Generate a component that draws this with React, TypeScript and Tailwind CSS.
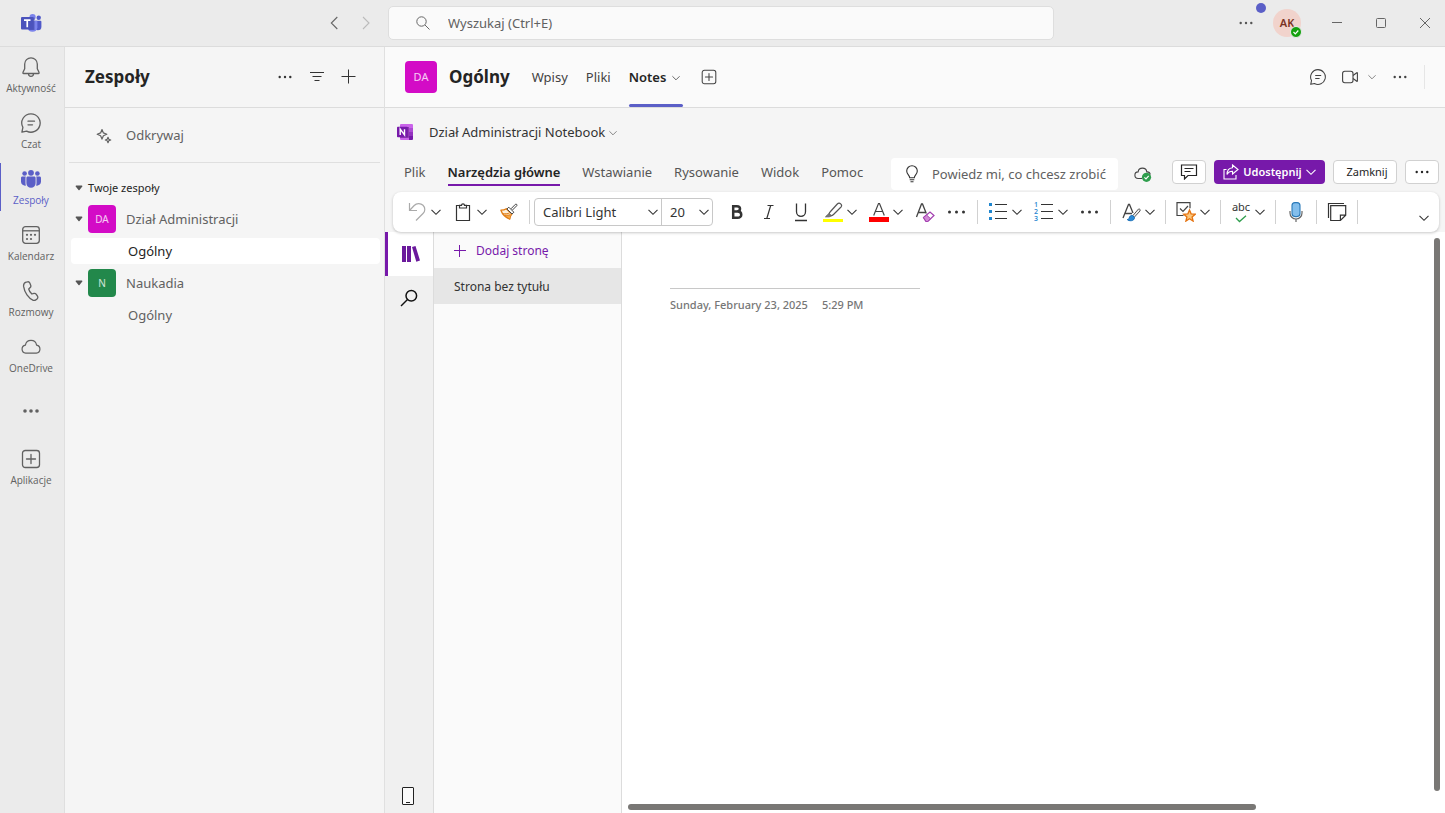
import React from "react";

type IconProps = { className?: string };

function Chevron({ className = "h-2.5 w-2.5" }: IconProps) {
  return (
    <svg viewBox="0 0 10 10" className={`shrink-0 ${className}`} fill="none" stroke="currentColor" strokeWidth="1.1" aria-hidden="true">
      <path d="M0.5 2.8 5 7.3 9.5 2.8" />
    </svg>
  );
}

function Dots() {
  return (
    <svg viewBox="0 0 16 16" className="h-4 w-4" fill="currentColor" aria-hidden="true">
      <circle cx="2.7" cy="8" r="1.2" />
      <circle cx="8" cy="8" r="1.2" />
      <circle cx="13.3" cy="8" r="1.2" />
    </svg>
  );
}

function WideDots() {
  return (
    <svg viewBox="0 0 20 16" className="h-4 w-5" fill="currentColor" aria-hidden="true">
      <circle cx="2.5" cy="8" r="1.5" />
      <circle cx="9.5" cy="8" r="1.5" />
      <circle cx="16.5" cy="8" r="1.5" />
    </svg>
  );
}

function Caret() {
  return (
    <svg viewBox="0 0 8 6" className="h-1.5 w-2 shrink-0" fill="#555" aria-hidden="true">
      <path d="M1.2.6h5.6a.6.6 0 0 1 .5 1L4.5 4.900a.7.7 0 0 1-1 0L.7 1.600a.6.6 0 0 1 .5-1z" />
    </svg>
  );
}

function TeamsLogo() {
  return (
    <svg viewBox="0 0 22 20" className="h-5 w-[22px]" aria-hidden="true">
      <circle cx="18.7" cy="4.8" r="2.2" fill="#5059c9" />
      <path d="M15 7.8h5.5c.5 0 .9.4.9.9v5a3.6 3.6 0 0 1-3.6 3.6c-1.6 0-2.8-1-2.8-2.5z" fill="#5059c9" />
      <circle cx="12.6" cy="4" r="3.1" fill="#7b83eb" />
      <path d="M7.5 7.8h9c.5 0 .9.4.9.9v5.8a5 5 0 0 1-9.900 0z" fill="#7b83eb" />
      <path d="M9 4.5h5.5V17H9z" fill="#3b40a0" opacity=".6" />
      <rect x="1" y="4" width="12.5" height="12.5" rx="1" fill="#4b53bc" />
      <path d="M4 7.2h6.5M7.250 7.2v7" stroke="#fff" strokeWidth="1.7" />
    </svg>
  );
}

function OneNoteLogo() {
  return (
    <svg viewBox="0 0 16 16" className="h-4 w-4" aria-hidden="true">
      <path d="M3 1a1 1 0 0 1 1-1h8v16H4a1 1 0 0 1-1-1z" fill="#ca64ea" />
      <path d="M12 0h3a1 1 0 0 1 1 1v3.5h-4z" fill="#ca64ea" />
      <path d="M12 4h4v4h-4z" fill="#ae4bd5" />
      <path d="M12 8h4v4h-4z" fill="#9332bf" />
      <path d="M12 12h4v3a1 1 0 0 1-1 1h-3z" fill="#7719aa" />
      <path d="M3 3h8.800v10.800H3z" fill="#4b1270" opacity=".6" />
      <rect x="0" y="2.8" width="10.7" height="10.4" rx=".8" fill="#7719aa" />
      <path d="M3.2 10.900V5.200L7.500 10.900V5.200" stroke="#fff" strokeWidth="1.4" fill="none" />
    </svg>
  );
}

function ChatIcon({ className = "h-5 w-5" }: IconProps) {
  return (
    <svg viewBox="0 0 20 20" className={className} fill="none" stroke="currentColor" strokeWidth="1.3" strokeLinecap="round" strokeLinejoin="round" aria-hidden="true">
      <path d="M10 .8a9.200 9.200 0 1 1-4.400 17.300L.9 19.200 1.900 14.400A9.200 9.200 0 0 1 10 .8z" />
      <path d="M7 8.2h6.500M7 11.8h4.500" />
    </svg>
  );
}

function BellIcon() {
  return (
    <svg viewBox="0 0 20 20" className="h-5 w-5" fill="none" stroke="currentColor" strokeWidth="1.3" strokeLinejoin="round" aria-hidden="true">
      <path d="M10 .8c-3.500 0-6.300 2.800-6.300 6.300v4.600L1.900 15.600c-.2.400.1.900.6.900h15c.5 0 .8-.5.600-.9l-1.800-3.900V7.100C16.300 3.600 13.500.8 10 .8z" />
      <path d="M7.500 16.800a2.500 2.500 0 0 0 5 0" />
    </svg>
  );
}

function PeopleIcon() {
  return (
    <svg viewBox="0 0 20 20" className="h-5 w-5" fill="currentColor" aria-hidden="true">
      <circle cx="10" cy="3.8" r="2.900" />
      <circle cx="3.6" cy="4.5" r="2.300" />
      <circle cx="16.4" cy="4.5" r="2.300" />
      <path d="M6.800 7.600h6.400c.8 0 1.400.6 1.400 1.400v5.200a4.600 4.600 0 0 1-9.200 0V9c0-.8.6-1.400 1.400-1.400z" />
      <path d="M1.400 7.600h3.500c-.3.400-.4.900-.4 1.400v5.200c0 .8.200 1.600.5 2.300A4 4 0 0 1 0 12.700V9c0-.8.6-1.400 1.400-1.400zM18.600 7.600h-3.500c.3.400.4.900.4 1.400v5.200c0 .8-.2 1.600-.5 2.300a4 4 0 0 0 5-3.800V9c0-.8-.6-1.400-1.400-1.400z" />
    </svg>
  );
}

function CalendarIcon() {
  return (
    <svg viewBox="0 0 20 20" className="h-5 w-5" fill="none" stroke="currentColor" strokeWidth="1.3" aria-hidden="true">
      <rect x="1.7" y="1.7" width="16.6" height="16.6" rx="2.8" />
      <path d="M1.700 5.800h16.600" />
      <g fill="currentColor" stroke="none">
        <circle cx="6" cy="9.800" r="1.100" />
        <circle cx="10" cy="9.800" r="1.100" />
        <circle cx="14" cy="9.800" r="1.100" />
        <circle cx="6" cy="14" r="1.100" />
        <circle cx="10" cy="14" r="1.100" />
      </g>
    </svg>
  );
}

function PhoneIcon() {
  return (
    <svg viewBox="0 0 20 20" className="h-5 w-5" fill="none" stroke="currentColor" strokeWidth="1.3" strokeLinejoin="round" aria-hidden="true">
      <path d="M5.200 1.200l1.200-.3c1-.3 2 .2 2.400 1.200l.9 2.200c.3.800.1 1.700-.5 2.300L7.700 8c.4 1.800 1.600 3.600 3.200 5l2-.6c.8-.2 1.700.1 2.200.8l1.300 1.800c.6.900.5 2-.2 2.800l-.8.8c-.9.800-2.100 1.100-3.200.7C7.500 17.500 3.500 11.500 2.600 5.400c-.2-1.900.8-3.700 2.600-4.200z" />
    </svg>
  );
}

function CloudIcon() {
  return (
    <svg viewBox="0 0 20 20" className="h-5 w-5" fill="none" stroke="currentColor" strokeWidth="1.2" aria-hidden="true">
      <path d="M4.700 16.200h10.600a4.100 4.100 0 0 0 .3-8.100 5.700 5.700 0 0 0-11.200 0 4.100 4.100 0 0 0 .3 8.100z" />
    </svg>
  );
}

function AddBoxIcon({ className = "h-5 w-5" }: IconProps) {
  return (
    <svg viewBox="0 0 20 20" className={className} fill="none" stroke="currentColor" strokeWidth="1.3" strokeLinecap="round" aria-hidden="true">
      <rect x="1.5" y="1.5" width="17" height="17" rx="2.8" />
      <path d="M10 5.500v9M5.500 10h9" />
    </svg>
  );
}

function RailDots() {
  return (
    <svg viewBox="0 0 20 20" className="h-5 w-5" fill="currentColor" aria-hidden="true">
      <circle cx="4" cy="9" r="1.8" />
      <circle cx="10" cy="9" r="1.8" />
      <circle cx="16" cy="9" r="1.8" />
    </svg>
  );
}

const railItems = [
  { label: "Aktywność", icon: <BellIcon /> },
  { label: "Czat", icon: <ChatIcon /> },
  { label: "Zespoły", icon: <PeopleIcon />, active: true },
  { label: "Kalendarz", icon: <CalendarIcon /> },
  { label: "Rozmowy", icon: <PhoneIcon /> },
  { label: "OneDrive", icon: <CloudIcon /> },
  { label: "", icon: <RailDots /> },
  { label: "Aplikacje", icon: <AddBoxIcon /> },
];

function TitleBar() {
  return (
    <header className="flex h-[47px] shrink-0 items-center border-b border-[#dcdcdc] bg-[#ebebeb] text-[#555]">
      <div className="flex w-[388px] shrink-0 items-center pr-1.5 pl-5">
        <TeamsLogo />
        <div className="ml-auto flex">
          <button aria-label="Wstecz" className="flex h-8 w-8 items-center justify-center text-[#666]">
            <svg viewBox="0 0 8 14" className="h-3.5 w-2" fill="none" stroke="currentColor" strokeWidth="1.1"><path d="M7.300 1 1.300 7l6 6" /></svg>
          </button>
          <button aria-label="Dalej" className="flex h-8 w-8 items-center justify-center text-[#bbb]">
            <svg viewBox="0 0 8 14" className="h-3.5 w-2" fill="none" stroke="currentColor" strokeWidth="1.1"><path d="m1 1 6 6-6 6" /></svg>
          </button>
        </div>
      </div>
      <label className="flex h-[34px] max-w-[666px] flex-1 items-center gap-[18px] rounded-[5px] border border-[#dedede] bg-[#fafafa] pl-[27px]">
        <svg viewBox="0 0 14 14" className="h-3.5 w-3.5" fill="none" stroke="#666" strokeWidth="1"><circle cx="5.5" cy="5.5" r="4.7" /><path d="m9 9 4.500 4.500" /></svg>
        <input aria-label="Wyszukaj" placeholder="Wyszukaj (Ctrl+E)" className="min-w-0 flex-1 bg-transparent pt-0.5 text-[13px] outline-none placeholder:text-[#616161]" />
      </label>
      <div className="ml-auto flex shrink-0 items-center">
        <button aria-label="Więcej" className="relative mr-[19px] flex h-8 w-4 items-center justify-center">
          <Dots />
          <span className="absolute -top-1 left-[18px] h-2.5 w-2.5 rounded-full bg-[#5b5fc7]" />
        </button>
        <button aria-label="Konto" className="relative mr-4 h-7 w-7 rounded-full bg-[#f1d3cc] text-[11px] font-semibold text-[#7a3324]">
          AK
          <span className="absolute -right-px -bottom-px flex h-3 w-3 items-center justify-center rounded-full border border-[#ebebeb] bg-[#13a10e]">
            <svg viewBox="0 0 8 8" className="h-2 w-2" fill="none" stroke="#fff" strokeWidth="1.2"><path d="m1.500 4 1.800 1.800 3-3.300" /></svg>
          </span>
        </button>
        <div className="flex gap-1 text-[#666]">
          <button aria-label="Minimalizuj" className="flex h-8 w-10 items-center justify-center">
            <svg viewBox="0 0 12 12" className="h-3 w-3" stroke="currentColor"><path d="M1 5.500h10" /></svg>
          </button>
          <button aria-label="Maksymalizuj" className="flex h-8 w-10 items-center justify-center">
            <svg viewBox="0 0 12 12" className="h-3 w-3" fill="none" stroke="currentColor"><rect x="1.5" y="1.5" width="9" height="9" rx="1" /></svg>
          </button>
          <button aria-label="Zamknij okno" className="flex h-8 w-10 items-center justify-center">
            <svg viewBox="0 0 12 12" className="h-3 w-3" stroke="currentColor"><path d="m1 1 10 10M11 1 1 11" /></svg>
          </button>
        </div>
      </div>
    </header>
  );
}

function Rail() {
  return (
    <nav className="flex w-[65px] shrink-0 flex-col gap-2 border-r border-[#dfdfdf] bg-[#ebebeb] pt-1">
      {railItems.map((item, i) => (
        <button
          key={i}
          aria-label={item.label || "Więcej aplikacji"}
          className={
            item.active
              ? "flex h-12 flex-col items-center justify-center gap-1 border-l border-[#5b5fc7] pt-0.5 pr-[3px] text-[#5b5fc7]"
              : "flex h-12 flex-col items-center justify-center gap-1 border-l border-transparent pt-0.5 pr-[3px] text-[#616161]"
          }
        >
          {item.icon}
          {item.label && <span className="font-['Open_Sans',sans-serif] text-[10px] leading-[14px]">{item.label}</span>}
        </button>
      ))}
    </nav>
  );
}

function TeamRow({ initials, name, color }: { initials: string; name: string; color: string }) {
  return (
    <button className="flex h-8 w-full items-center pl-[10px] text-left text-[13px] text-[#616161]">
      <Caret />
      <span className={`mr-[10px] ml-[5px] flex h-7 w-7 items-center justify-center rounded text-[10px] text-white/80 ${color}`}>{initials}</span>
      <span className="pt-0.5">{name}</span>
    </button>
  );
}

function ChannelRow({ name, active }: { name: string; active?: boolean }) {
  return (
    <button
      className={
        active
          ? "my-[3px] ml-[6px] flex h-[26px] items-center rounded bg-white pt-0.5 pl-[57px] text-[13px] text-[#242424]"
          : "my-[3px] ml-[6px] flex h-[26px] items-center rounded pt-0.5 pl-[57px] text-[13px] text-[#616161]"
      }
    >
      {name}
    </button>
  );
}

function Sidebar() {
  return (
    <aside className="flex w-80 shrink-0 flex-col border-r border-[#e0e0e0] bg-[#f5f5f5]">
      <div className="flex h-[61px] items-center border-b border-[#dcdcdc] pr-[27px] pl-5 text-[#333]">
        <h1 className="text-[17px] font-bold text-[#242424]">Zespoły</h1>
        <div className="ml-auto flex gap-4">
          <button aria-label="Więcej opcji" className="flex h-8 w-4 items-center justify-center"><Dots /></button>
          <button aria-label="Filtruj" className="flex h-8 w-4 items-center justify-center">
            <svg viewBox="0 0 16 16" className="h-4 w-4" stroke="currentColor"><path d="M1 3.500h14M3.500 7.500h9M5.500 11.500h5" /></svg>
          </button>
          <button aria-label="Utwórz zespół" className="flex h-8 w-4 items-center justify-center">
            <svg viewBox="0 0 16 16" className="h-4 w-4" stroke="currentColor"><path d="M7.500.5v14M.5 7.500h14" /></svg>
          </button>
        </div>
      </div>
      <div className="px-1">
        <button className="flex h-[55px] w-full items-center gap-[14px] border-b border-[#dfdfdf] pt-0.5 pl-[27px] text-[13px] text-[#616161]">
          <svg viewBox="0 0 16 16" className="h-4 w-4" fill="none" stroke="currentColor" strokeWidth="1.2" strokeLinejoin="round" aria-hidden="true">
            <path d="M6 1.500 7.400 4.900 10.800 6.300 7.400 7.700 6 11.100 4.600 7.700 1.200 6.300l3.400-1.400zM12 9.300l.8 1.900 1.900.8-1.900.8-.8 1.900-.8-1.900-1.900-.8 1.900-.8z" />
          </svg>
          Odkrywaj
        </button>
      </div>
      <div className="flex flex-col pt-[17px] pr-1">
        <button className="mb-[7px] flex h-4 items-center gap-[5px] pl-[10px] text-[11px] text-[#242424]">
          <Caret />
          Twoje zespoły
        </button>
        <TeamRow initials="DA" name="Dział Administracji" color="bg-[#d30bc6]" />
        <ChannelRow name="Ogólny" active />
        <TeamRow initials="N" name="Naukadia" color="bg-[#22884b]" />
        <ChannelRow name="Ogólny" />
      </div>
    </aside>
  );
}

function ChannelHeader() {
  return (
    <div className="flex h-[61px] shrink-0 items-center border-b border-[#dcdcdc] bg-[#fafafa] pr-5 pl-5 text-[13px] text-[#424242]">
      <span className="flex h-8 w-8 items-center justify-center rounded bg-[#d30bc6] text-[11px] text-white/80">DA</span>
      <h2 className="ml-3 text-[17px] font-bold text-[#242424]">Ogólny</h2>
      <nav className="ml-[22px] flex h-full items-center gap-[18px]">
        <a href="#wpisy" className="pt-px">Wpisy</a>
        <a href="#pliki" className="pt-px">Pliki</a>
        <a href="#notes" className="relative flex h-[60px] items-center gap-1.5 pt-px pr-[3px] font-semibold text-[#242424]">
          Notes
          <Chevron className="h-2 w-2 text-[#555]" />
          <span className="absolute inset-x-0 bottom-0 h-[3px] rounded-full bg-[#5b5fc7]" />
        </a>
        <button aria-label="Dodaj kartę"><AddBoxIcon className="h-4 w-4" /></button>
      </nav>
      <div className="ml-auto flex items-center gap-4">
        <button aria-label="Pokaż konwersację"><ChatIcon className="h-4 w-4" /></button>
        <button aria-label="Spotkanie" className="flex items-center gap-2.5">
          <svg viewBox="0 0 16 14" className="h-3.5 w-4" fill="none" stroke="currentColor" strokeWidth="1.1" strokeLinejoin="round"><rect x=".6" y="1.3" width="10.4" height="11.4" rx="2.2" /><path d="m11 5.500 3.800-2.800c.3-.2.6 0 .6.300v8c0 .3-.3.5-.6.300L11 8.500" /></svg>
          <Chevron className="h-2 w-2 text-[#777]" />
        </button>
        <button aria-label="Więcej opcji kanału"><Dots /></button>
        <span className="h-6 w-px bg-[#e6e6e6]" />
      </div>
    </div>
  );
}

function RibbonTabs() {
  return (
    <div className="flex h-8 items-center pr-1.5 pl-[19px]">
      <nav className="flex h-full shrink-0 items-center gap-[22px] pb-0.5 text-[13px] text-[#555] [&>a]:border-b-2 [&>a]:leading-6">
        <a href="#plik" className="border-transparent">Plik</a>
        <a href="#narzedzia" className="border-[#7719aa] font-semibold text-[#242424]">Narzędzia główne</a>
        <a href="#wstawianie" className="border-transparent">Wstawianie</a>
        <a href="#rysowanie" className="border-transparent">Rysowanie</a>
        <a href="#widok" className="border-transparent">Widok</a>
        <a href="#pomoc" className="border-transparent">Pomoc</a>
      </nav>
      <label className="ml-auto flex h-8 w-[227px] items-center gap-3 rounded bg-white pl-[13px]">
        <svg viewBox="0 0 16 18" className="h-[18px] w-4 shrink-0" fill="none" stroke="#333" strokeWidth="1.1"><path d="M5.700 12.800c0-2.500-3-3.500-3-6.800a5.300 5.300 0 0 1 10.600 0c0 3.300-3 4.300-3 6.800zM5.700 14.800h4.600M6.500 16.800h3" /></svg>
        <input aria-label="Powiedz mi, co chcesz zrobić" placeholder="Powiedz mi, co chcesz zrobić" className="min-w-0 flex-1 bg-transparent pt-0.5 text-[13px] outline-none placeholder:text-[#616161]" />
      </label>
      <button aria-label="Zapisano" className="ml-4 shrink-0">
        <svg viewBox="0 0 18 16" className="h-4 w-[18px]" fill="none"><path d="M8 12.500H4.300a3.300 3.300 0 0 1-.2-6.600 4.400 4.400 0 0 1 8.700 0 3.300 3.300 0 0 1 3.500 2.600" stroke="#444" strokeWidth="1.1" /><circle cx="12.5" cy="11.3" r="4.6" fill="#2f9e4d" /><path d="m10.400 11.300 1.600 1.600 2.700-3" stroke="#fff" strokeWidth="1.1" /></svg>
      </button>
      <div className="mb-1 ml-5 flex h-6 shrink-0 gap-2 text-[11px] text-[#242424]">
        <button aria-label="Komentarze" className="flex w-[34px] items-center justify-center rounded border border-[#d1d1d1] bg-white">
          <svg viewBox="0 0 18 16" className="h-4 w-[18px]" fill="none" stroke="currentColor" strokeWidth="1.2"><path d="M1.500 1h15v10.500H8L4.500 15v-3.500h-3zM4.500 4.500h9M4.500 7.500h6" /></svg>
        </button>
        <button className="flex w-[111px] items-center justify-center gap-1 rounded bg-[#7719aa] font-semibold text-white">
          <svg viewBox="0 0 16 16" className="h-4 w-4" fill="none" stroke="currentColor" strokeWidth="1.1"><path d="M3.500 5.500h-2.500v9.500h12v-4M9.500 1l5.500 4.500-5.500 4.500V7.300C7 7.300 5.200 8.300 4 10.500 4 6.500 6 4 9.500 3.700z" /></svg>
          Udostępnij
          <Chevron />
        </button>
        <button className="w-16 rounded border border-[#d1d1d1] bg-white pl-1">Zamknij</button>
        <button aria-label="Więcej" className="flex w-[34px] items-center justify-center rounded border border-[#d1d1d1] bg-white"><Dots /></button>
      </div>
    </div>
  );
}

function Tool({ label, menu, children }: { label: string; menu?: boolean; children: React.ReactNode }) {
  return (
    <div className="flex shrink-0">
      <button aria-label={label} className="flex h-8 w-6 items-center justify-center">{children}</button>
      {menu && (
        <button aria-label={`${label} – opcje`} className="flex h-8 w-3.5 items-center justify-center"><Chevron /></button>
      )}
    </div>
  );
}

function Separator() {
  return <span className="h-6 w-px shrink-0 bg-[#d1d1d1]" />;
}

function Toolbar() {
  return (
    <div className="relative z-10 mr-1.5 ml-2 flex h-10 items-center gap-2 rounded-lg bg-white pr-2.5 pl-3 text-[#333] shadow-[0_1px_3px_rgba(0,0,0,0.22)]">
      <Tool label="Cofnij" menu>
        <svg viewBox="0 0 18 20" className="h-5 w-[18px]" fill="none" stroke="#aaa" strokeWidth="1.2"><path d="M1.500 1v7.500H9M1.500 8.500l4.700-5c2.300-2.300 6.300-2.600 8.800-.2 2.400 2.300 2.400 5.900 0 8.200L8 18.500" /></svg>
      </Tool>
      <Tool label="Wklej" menu>
        <svg viewBox="0 0 16 20" className="h-5 w-4" fill="none" stroke="currentColor" strokeWidth="1.2"><path d="M4.500 3.500h-3v15h13v-15h-3" /><path d="M4.500 6V3.300h2a1.500 1.500 0 0 1 3 0h2V6z" /></svg>
      </Tool>
      <Tool label="Malarz formatów">
        <svg viewBox="0 0 18 18" className="h-[18px] w-[18px]" fill="none" strokeLinejoin="round">
          <path d="M6.300 5.700C4.800 6.800 3 7.200.9 7.200c1.500 4.300 4.600 7.300 8.900 8.900.2-2.200.8-3.800 2-5z" fill="#fdf0dc" stroke="#e07b12" strokeWidth="1.3" />
          <path d="M2.800 10.700c2.700.6 5 .2 7-.9M9.800 16c-2.200-1-3.800-2-5.300-3.800 2.800.3 4.700-.1 6-.6" fill="#f3a848" stroke="#e07b12" />
          <path d="m11 5.800 4.300-4.400a.9.900 0 0 1 1.400 1.400L12.300 7.200" fill="#fff" stroke="#444" />
          <path d="m8.800 4.200 5 5-1.700 1.800-5.200-5z" fill="#fff" stroke="#444" />
        </svg>
      </Tool>
      <div className="flex shrink-0 items-center gap-1">
        <Separator />
        <div className="flex h-7 w-[179px] rounded border border-[#c8c8c8] text-[13px]">
          <div className="relative flex flex-1 items-center border-r border-[#c8c8c8]">
            <select aria-label="Czcionka" className="h-full w-full appearance-none bg-transparent pt-0.5 pl-2 outline-none"><option>Calibri Light</option></select>
            <Chevron className="pointer-events-none absolute right-[3px] h-2.5 w-2.5" />
          </div>
          <div className="relative flex w-[50px] items-center">
            <select aria-label="Rozmiar czcionki" className="h-full w-full appearance-none bg-transparent pt-0.5 pl-2 outline-none"><option>20</option></select>
            <Chevron className="pointer-events-none absolute right-[3px] h-2.5 w-2.5" />
          </div>
        </div>
      </div>
      <div className="flex shrink-0 items-center">
        <button aria-label="Pogrubienie" className="flex h-8 w-8 items-center justify-center">
          <svg viewBox="0 0 14 16" className="h-4 w-3.5" fill="none" stroke="currentColor" strokeWidth="2.5" aria-hidden="true"><path d="M3.200 2.200h3.600c4.300 0 4.300 5.300 0 5.300H3.200M3.200 7.500h4.300c5 0 5 6.300 0 6.300H3.200zM3.200 1v14" /></svg>
        </button>
        <button aria-label="Kursywa" className="flex h-8 w-8 items-center justify-center">
          <svg viewBox="0 0 12 16" className="h-4 w-3" fill="none" stroke="currentColor" strokeWidth="1.2" aria-hidden="true"><path d="M4.500 1.500h6M1 14.500h6M7.700 1.500l-3.900 13" /></svg>
        </button>
        <button aria-label="Podkreślenie" className="mr-1 flex h-8 w-8 items-center justify-center">
          <svg viewBox="0 0 14 20" className="h-5 w-3.5" fill="none" stroke="currentColor" strokeWidth="1.3" aria-hidden="true"><path d="M2.500 1.500v8.300a4.500 4.500 0 0 0 9 0V1.500M1 18.500h12" /></svg>
        </button>
        <Tool label="Wyróżnienie" menu>
          <svg viewBox="0 0 20 20" className="h-5 w-5 shrink-0" fill="none" strokeLinejoin="round"><path d="M7.500 9.500 14.300 2a2.400 2.400 0 0 1 3.500 3.300L10.500 12.500c-1 1-2.200 1.200-3.300 1l-1-1c-.2-1 .3-2 1.300-3z" stroke="#555" strokeWidth="1.2" /><path d="m6 11.500 2.500 2.300-2.300 1H2.500z" fill="#777" stroke="#666" /><path d="M0 17h20v3H0z" fill="#ff0" /></svg>
        </Tool>
      </div>
      <Tool label="Kolor czcionki" menu>
        <svg viewBox="0 0 20 20" className="h-5 w-5 shrink-0" fill="none"><path d="M4.700 13.500 9.500 1.500h1l4.800 12M6.300 9.500h7.400" stroke="#444" strokeWidth="1.2" /><path d="M0 15h20v5H0z" fill="red" /></svg>
      </Tool>
      <Tool label="Wyczyść formatowanie">
        <svg viewBox="0 0 20 20" className="h-5 w-5 shrink-0" fill="none"><path d="M1.500 15 6.500 2h1l3.800 9.500M3.200 10.500h7.500" stroke="#444" strokeWidth="1.3" /><path d="m8.500 15.500 6.500-5.500 4 3.500-6.300 6H11z" fill="#fff" stroke="#a33fb0" strokeWidth="1.2" /><path d="m8.500 15.500 3-2.500 4 3.700-2.800 2.800H11z" fill="#d18ad6" stroke="#a33fb0" strokeWidth="1" /></svg>
      </Tool>
      <Tool label="Więcej opcji czcionki"><WideDots /></Tool>
      <Separator />
      <Tool label="Punktory" menu>
        <svg viewBox="0 0 20 20" className="h-5 w-5 shrink-0"><path d="M1 1h3v3H1zM1 8h3v3H1zM1 15h3v3H1z" fill="#1f86cf" /><path d="M7 2.500h12M7 9.500h12M7 16.500h12" stroke="#333" /></svg>
      </Tool>
      <Tool label="Numerowanie" menu>
        <svg viewBox="0 -4 20 28" className="h-7 w-5 shrink-0"><g fill="#1f86cf" fontSize="7" fontFamily="Open Sans, sans-serif" fontWeight="600"><text x="0" y="5">1</text><text x="0" y="12">2</text><text x="0" y="19">3</text></g><path d="M7 2.500h12M7 9.500h12M7 16.500h12" stroke="#333" /></svg>
      </Tool>
      <Tool label="Więcej opcji akapitu"><WideDots /></Tool>
      <Separator />
      <Tool label="Style" menu>
        <svg viewBox="0 0 20 20" className="h-5 w-5 shrink-0" fill="none"><path d="M2 16 7.500 2.500h1L12 11M4 11.500h7" stroke="#444" strokeWidth="1.3" /><path d="m17.500 7-6 7 1.500 1.500 6-6.500c.6-1.500-.5-2.500-1.500-2z" fill="#eee" stroke="#555" /><path d="M11.500 13.500c-2-.3-3 1-3.300 2.500-.2 1.200-1.200 1.500-2 1.500 1.500 1.800 7.300 2 7.300-2z" fill="#2a8ad6" stroke="#1a6fb8" /></svg>
      </Tool>
      <Separator />
      <Tool label="Tagi" menu>
        <svg viewBox="0 0 20 20" className="h-5 w-5 shrink-0" fill="none"><path d="M7.500 13.500H1V.7h13v5.500" stroke="#444" strokeWidth="1.2" /><path d="m4 6.500 3 3 5-5.500" stroke="#444" strokeWidth="1.2" /><path d="m13.500 8 1.600 3.800 4.200.4-3.200 2.700 1 4.200-3.600-2.300-3.600 2.300 1-4.200-3.200-2.700 4.200-.4z" fill="#fbc77d" stroke="#e5720f" strokeWidth="1.3" /></svg>
      </Tool>
      <Separator />
      <Tool label="Pisownia" menu>
        <span className="flex flex-col items-center text-[11px] leading-[9px]">
          abc
          <svg viewBox="0 0 12 8" className="mt-1 h-2 w-3" fill="none" stroke="#2f9e4d" strokeWidth="1.3"><path d="m1 3 3.500 3.500L11 .8" /></svg>
        </span>
      </Tool>
      <Separator />
      <Tool label="Dyktuj">
        <svg viewBox="0 0 14 20" className="h-5 w-3.5" fill="none"><path d="M1 9v2a6 6 0 0 0 12 0V9M7 17v3" stroke="#666" strokeWidth="1.2" /><rect x="3" y=".6" width="8" height="14" rx="3" fill="#83beec" stroke="#2a7ab9" strokeWidth="1.1" /></svg>
      </Tool>
      <Separator />
      <Tool label="Notatki szybkie">
        <svg viewBox="0 0 20 20" className="h-5 w-5 shrink-0" fill="none" stroke="currentColor" strokeWidth="1.2"><path d="M1.500 16V1.500H17M3.700 18.500V3.700h15v9.500l-5.300 5.300zM13.400 18.500v-5.300h5.300" /></svg>
      </Tool>
      <Separator />
      <button aria-label="Zwiń wstążkę" className="ml-auto flex h-full shrink-0 items-end pb-[9px]"><Chevron /></button>
    </div>
  );
}

function Notebook() {
  return (
    <div className="flex min-h-0 flex-1">
      <div className="flex w-[49px] shrink-0 flex-col border-r border-[#dcdcdc] bg-[#f0f0f0]">
        <button aria-label="Notesy" className="flex h-11 items-center justify-center border-l-[3px] border-[#7719aa] bg-white">
          <svg viewBox="0 0 20 18" className="h-[18px] w-5" fill="#6b1a9c"><path d="M1 1h4v16H1zM6 1h4v16H6zM11 2l3.500-1L19 15.500 15.300 16.700z" /></svg>
        </button>
        <button aria-label="Szukaj w notesie" className="flex h-11 items-center justify-center">
          <svg viewBox="0 0 18 18" className="h-[18px] w-[18px]" fill="none" stroke="#111" strokeWidth="1.5"><circle cx="11.3" cy="6.7" r="5.3" /><path d="M7.500 10.500 1 17" /></svg>
        </button>
        <button aria-label="Aplikacja mobilna" className="mt-auto flex h-[34px] items-center justify-center pr-0.5">
          <svg viewBox="0 0 12 18" className="h-[18px] w-3" fill="#fafafa" stroke="#222"><rect x=".5" y=".5" width="11" height="17" rx=".5" /><path d="M4 15.500h4" /></svg>
        </button>
      </div>
      <div className="w-[188px] shrink-0 border-r border-[#dcdcdc] bg-[#fafafa] text-xs">
        <button className="flex h-9 w-full items-center gap-2.5 pt-0.5 pl-5 text-[#7719aa]">
          <svg viewBox="0 0 12 12" className="h-3 w-3" stroke="currentColor"><path d="M5.500 0v12M0 5.500h12" /></svg>
          Dodaj stronę
        </button>
        <button className="flex h-9 w-full items-center bg-[#e6e6e6] pt-0.5 pl-5 text-[#333]">Strona bez tytułu</button>
      </div>
      <main className="flex min-w-0 flex-1 flex-col bg-white">
        <div className="flex min-h-0 flex-1">
          <div className="flex-1 pt-14 pl-12">
            <div className="w-[250px] border-t border-[#c8c8c8] pt-2">
              <p className="flex gap-3.5 text-[11px] leading-4 font-medium text-[#767676]">
                <span>Sunday, February 23, 2025</span>
                <span>5:29 PM</span>
              </p>
            </div>
          </div>
          <div className="mt-1.5 mr-[5px] w-1.5 rounded-full bg-[#797775]" />
        </div>
        <div className="flex h-[22px] shrink-0 items-end pr-3 pb-[3px] pl-1.5">
          <div className="h-1.5 w-[78%] rounded-full bg-[#797775]" />
        </div>
      </main>
    </div>
  );
}

export default function App() {
  return (
    <div className="flex h-screen min-w-[1400px] flex-col overflow-hidden bg-[#f5f5f5] font-['Noto_Sans','Open_Sans',sans-serif]">
      <TitleBar />
      <div className="flex min-h-0 flex-1">
        <Rail />
        <Sidebar />
        <section className="flex min-w-0 flex-1 flex-col">
          <ChannelHeader />
          <div className="flex h-12 shrink-0 items-center gap-4 pl-3 text-[13px] text-[#333]">
            <OneNoteLogo />
            <button className="flex items-center gap-1 pt-0.5">
              Dział Administracji Notebook
              <Chevron className="h-2 w-2 text-[#777]" />
            </button>
          </div>
          <div className="shrink-0 py-0.5">
            <RibbonTabs />
          </div>
          <Toolbar />
          <Notebook />
        </section>
      </div>
    </div>
  );
}
